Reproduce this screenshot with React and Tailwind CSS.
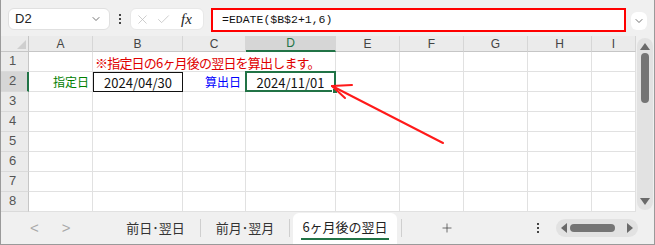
import { ChevronDown, X, Check, Plus } from "lucide-react";

const JP = "font-['Noto_Sans_CJK_JP','Noto_Sans',sans-serif]";

const COLS = [
  { k: "A", w: "w-[64px]" },
  { k: "B", w: "w-[90px]" },
  { k: "C", w: "w-[63px]" },
  { k: "D", w: "w-[90px]" },
  { k: "E", w: "w-[64px]" },
  { k: "F", w: "w-[64px]" },
  { k: "G", w: "w-[64px]" },
  { k: "H", w: "w-[64px]" },
  { k: "I", w: "w-[44px]" },
];

function Cell({ w, line = "border-b border-r border-[#e1e1e1]", className = "", children }) {
  return <div className={`${w} h-full shrink-0 flex items-end ${line} ${className}`}>{children}</div>;
}

function Row({ n, active, children }) {
  return (
    <div className="flex h-[20px]">
      <div
        className={`w-[28px] shrink-0 h-full flex items-end pb-[1px] pl-[8px] text-[13px] text-[#555] font-['Liberation_Sans',sans-serif] border-b border-[#dadada] ${
          active ? "bg-[#d6d6d6] border-r-2 border-r-[#217346]" : "bg-[#ebebeb] border-r border-r-[#c6c6c6]"
        }`}
      >
        {n}
      </div>
      {children}
    </div>
  );
}

function EmptyRow({ n }) {
  return (
    <Row n={n}>
      {COLS.map((c) => (
        <Cell key={c.k} w={c.w} />
      ))}
    </Row>
  );
}

function Dots() {
  return (
    <div className="w-[20px] flex flex-col items-center justify-center gap-[2px]">
      <span className="w-[2px] h-[2px] bg-[#444]" />
      <span className="w-[2px] h-[2px] bg-[#444]" />
      <span className="w-[2px] h-[2px] bg-[#444]" />
    </div>
  );
}

export default function App() {
  return (
    <div className="relative w-[655px] h-[245px] bg-[#f0f0f0] border-x border-b border-[#9a9a9a] overflow-hidden flex flex-col">
      {/* toolbar */}
      <div className="h-[36px] shrink-0 flex items-start pt-[8px] pl-[7px]">
        <div className="w-[102px] h-[22px] bg-white rounded-md border border-[#e0e0e0] flex items-center pl-[6px] pr-[7px] justify-between">
          <span className="text-[13px] text-[#222] font-['Liberation_Sans',sans-serif]">D2</span>
          <ChevronDown className="w-[12px] h-[12px] text-[#444]" strokeWidth={1.5} />
        </div>
        <div className="h-[22px] flex">
          <Dots />
        </div>
        <div className="w-[74px] h-[22px] bg-white rounded-md border border-[#e8e8e8] flex items-center pl-[4px] gap-[6px]">
          <X className="w-[15px] h-[15px] text-[#bdbdbd]" strokeWidth={1.2} />
          <Check className="w-[15px] h-[15px] text-[#bdbdbd]" strokeWidth={1.2} />
          <span className="ml-[4px] text-[15px] italic text-[#222] font-['Liberation_Serif',serif] leading-none">fx</span>
        </div>
        <div className="ml-[7px] w-[415px] h-[24px] border-2 border-[#ff0000] bg-white flex items-center pl-[9px]">
          <span className="text-[11.5px] text-[#111] font-['Liberation_Mono',monospace]">=EDATE($B$2+1,6)</span>
        </div>
        <div className="ml-[5px] mt-[4px] w-[16px] h-[18px] bg-white rounded-md flex items-center justify-center">
          <ChevronDown className="w-[12px] h-[12px] text-[#444]" strokeWidth={1.5} />
        </div>
      </div>

      {/* sheet */}
      <div className="flex h-[176px] shrink-0">
        <div className="flex flex-col w-[635px] shrink-0 bg-white">
          {/* column headers */}
          <div className="flex h-[16px] bg-[#ebebeb]">
            <div className="w-[28px] shrink-0 h-full border-r border-b border-[#c6c6c6] flex items-end justify-end pr-[2px] pb-[2px]">
              <div className="w-0 h-0 border-l-[9px] border-l-transparent border-b-[9px] border-b-[#cfcfcf]" />
            </div>
            {COLS.map((c) => (
              <div
                key={c.k}
                className={`${c.w} shrink-0 h-full flex items-center justify-center text-[12px] font-['Liberation_Sans',sans-serif] border-r border-[#d6d6d6] ${
                  c.k === "D"
                    ? "bg-[#d6d6d6] text-[#217346] border-b-2 border-b-[#217346]"
                    : "text-[#444] border-b border-b-[#c6c6c6]"
                }`}
              >
                {c.k}
              </div>
            ))}
          </div>

          {/* row 1 */}
          <Row n="1">
            <Cell w="w-[64px]" />
            <Cell w="w-[90px]" line="border-b border-[#e1e1e1]" className="overflow-visible">
              <span className={`pl-[2px] pb-[1px] whitespace-nowrap text-[13px] leading-[15px] tracking-[-0.8px] text-[#e00000] ${JP}`}>
                ※指定日の6ヶ月後の翌日を算出します。
              </span>
            </Cell>
            <Cell w="w-[63px]" line="border-b border-[#e1e1e1]" />
            <Cell w="w-[90px]" />
            {COLS.slice(4).map((c) => (
              <Cell key={c.k} w={c.w} />
            ))}
          </Row>

          {/* row 2 */}
          <Row n="2" active>
            <Cell w="w-[64px]" className="justify-end">
              <span className={`pr-[3px] pb-[2px] text-[12px] leading-[14px] text-[#008000] ${JP}`}>指定日</span>
            </Cell>
            <Cell w="w-[90px]" line="border border-[#111]" className="justify-center">
              <span className={`pb-[1px] text-[13px] leading-[15px] text-[#111] ${JP}`}>2024/04/30</span>
            </Cell>
            <Cell w="w-[63px]" className="justify-end">
              <span className={`pr-[4px] pb-[2px] text-[12px] leading-[14px] text-[#0000ff] ${JP}`}>算出日</span>
            </Cell>
            <Cell w="w-[90px]" className="relative justify-center">
              <div className="absolute -left-[1px] -top-[1px] -right-[1px] -bottom-[1px] border-2 border-[#217346]" />
              <div className="absolute -right-[3px] -bottom-[3px] w-[6px] h-[6px] bg-[#217346] border border-white" />
              <span className={`pb-[1px] text-[13px] leading-[15px] text-[#111] ${JP}`}>2024/11/01</span>
            </Cell>
            {COLS.slice(4).map((c) => (
              <Cell key={c.k} w={c.w} />
            ))}
          </Row>

          <EmptyRow n="3" />
          <EmptyRow n="4" />
          <EmptyRow n="5" />
          <EmptyRow n="6" />
          <EmptyRow n="7" />
          <EmptyRow n="8" />
        </div>

        {/* vertical scrollbar */}
        <div className="flex-1 flex justify-center pt-[2px] pb-[2px] bg-[#f0f0f0]">
          <div className="w-[16px] h-full rounded-full bg-[#e2e2e2] flex flex-col items-center pt-[5px] pb-[5px]">
            <div className="w-0 h-0 border-l-[5px] border-r-[5px] border-b-[7px] border-l-transparent border-r-transparent border-b-[#6a6a6a]" />
            <div className="mt-[3px] w-[8px] h-[50px] rounded-full bg-[#757575]" />
            <div className="flex-1" />
            <div className="w-0 h-0 border-l-[5px] border-r-[5px] border-t-[7px] border-l-transparent border-r-transparent border-t-[#6a6a6a]" />
          </div>
        </div>
      </div>

      {/* sheet tabs */}
      <div className={`flex-1 flex items-stretch ${JP}`}>
        <div className="w-[92px] shrink-0 flex items-center pl-[29px] gap-[23px] text-[#a8a8a8] text-[15px] font-['Liberation_Sans',sans-serif]">
          <span>&lt;</span>
          <span>&gt;</span>
        </div>
        <div className="w-[107px] shrink-0 flex items-center justify-center pl-[18px] text-[13px] text-[#333]">前日･翌日</div>
        <div className="w-[1px] my-[7px] bg-[#cfcfcf]" />
        <div className="w-[88px] shrink-0 flex items-center justify-center text-[13px] text-[#333]">前月･翌月</div>
        <div className="w-[1px] my-[7px] bg-[#cfcfcf]" />
        <div className="ml-[3px] w-[104px] shrink-0 mt-[1px] bg-white rounded-t-md flex items-center justify-center">
          <span className="text-[13px] text-[#222] border-b-2 border-[#217346] leading-[18px] pb-[2px] px-[1px]">6ヶ月後の翌日</span>
        </div>
        <div className="ml-[4px] w-[1px] my-[7px] bg-[#cfcfcf]" />
        <div className="w-[90px] shrink-0 flex items-center justify-center">
          <Plus className="w-[14px] h-[14px] text-[#444]" strokeWidth={1.3} />
        </div>
        <div className="w-[36px] shrink-0" />
        <Dots />
        <div className="ml-[8px] my-[7px] w-[82px] rounded-full bg-[#e2e2e2] flex items-center px-[5px] gap-[3px]">
          <div className="w-0 h-0 border-t-[5px] border-b-[5px] border-r-[6px] border-t-transparent border-b-transparent border-r-[#6a6a6a]" />
          <div className="w-[45px] h-[8px] rounded-full bg-[#757575]" />
          <div className="flex-1" />
          <div className="w-0 h-0 border-t-[5px] border-b-[5px] border-l-[6px] border-t-transparent border-b-transparent border-l-[#6a6a6a]" />
        </div>
      </div>

      {/* red arrow overlay */}
      <svg className="absolute left-0 top-0 pointer-events-none" width="655" height="245">
        <g stroke="#ff1a1a" strokeWidth="2" fill="none" strokeLinecap="round">
          <line x1="442" y1="143" x2="331" y2="86" />
          <line x1="331" y1="86" x2="351" y2="85" />
          <line x1="331" y1="86" x2="344" y2="98" />
        </g>
      </svg>
    </div>
  );
}
